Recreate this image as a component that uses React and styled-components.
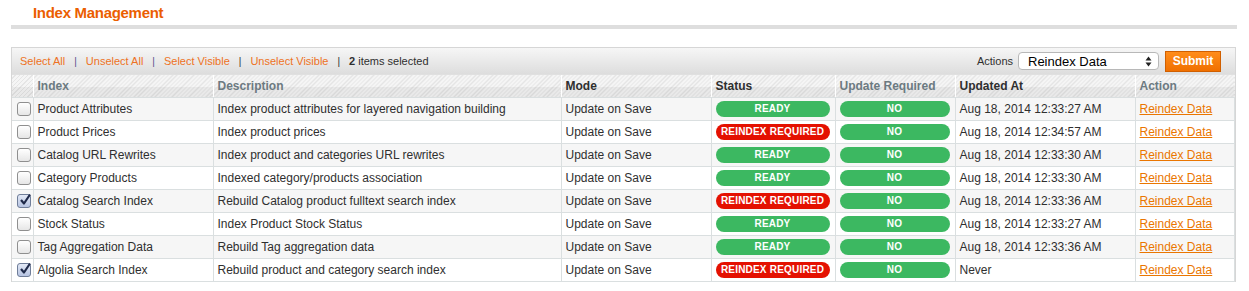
import React from 'react'
import styled, { createGlobalStyle } from 'styled-components'

const GlobalStyle = createGlobalStyle`
  body {
    margin: 0;
    background: #fff;
    font-family: Arial, "Liberation Sans", Helvetica, sans-serif;
    font-size: 12px;
    color: #2f2f2f;
  }
`

const Page = styled.div`
  padding: 4px 13px 0 11px;
`

const Title = styled.h3`
  margin: 0;
  padding-left: 22px;
  font-size: 15px;
  letter-spacing: -0.3px;
  line-height: 18px;
  font-weight: bold;
  color: #eb5e00;
`

const Rule = styled.div`
  height: 4px;
  margin-top: 3px;
  margin-right: -1px;
  background: #dedede;
`

const Grid = styled.div`
  margin-top: 18px;
  border: 1px solid #d6d6d6;
  border-bottom: none;
`

const MassBar = styled.div`
  height: 26px;
  display: flex;
  align-items: center;
  justify-content: space-between;
  padding: 0 14px 0 8px;
  background: linear-gradient(to bottom, #f6f6f6, #dddddd);
  border-bottom: 1px solid #e0e0e0;
`

const MassLinks = styled.div`
  display: flex;
  align-items: center;
  font-size: 11px;
  color: #2f2f2f;
`

const MassLink = styled.a`
  color: #ee7224;
  text-decoration: none;
`

const Sep = styled.span`
  color: ${p => p.dark ? '#2f2f2f' : '#5b4f8c'};
  margin: 0 9px;
  font-size: 10px;
`

const Strong = styled.strong`
  font-weight: bold;
  margin-right: 3px;
`

const ActionsBox = styled.div`
  display: flex;
  align-items: center;
  font-size: 11px;
`

const Label = styled.span`
  color: #2f2f2f;
  margin-right: 5px;
`

const Select = styled.div`
  width: 141px;
  height: 18px;
  box-sizing: border-box;
  display: flex;
  align-items: center;
  justify-content: space-between;
  padding: 0 6px 0 9px;
  background: #fff;
  border: 1px solid #b8b8b8;
  border-radius: 4px;
  font-size: 13px;
  color: #000;
`

const Submit = styled.button`
  margin-left: 6px;
  width: 56px;
  height: 21px;
  padding: 0;
  border: 1px solid #d05f00;
  background: linear-gradient(to bottom, #ff8c1a, #f07000);
  color: #fff;
  font-family: Arial, "Liberation Sans", sans-serif;
  font-size: 12px;
  font-weight: bold;
`

const Table = styled.table`
  width: 100%;
  border-collapse: collapse;
  table-layout: fixed;
`

const Th = styled.th`
  height: 22px;
  padding: 0 4px;
  text-align: left;
  font-size: 12px;
  font-weight: bold;
  color: ${p => p.dim ? '#6c7a81' : '#2f2f2f'};
  border-left: 1px solid #fff;
  border-bottom: 1px solid #dadfe0;
  background:
    linear-gradient(to bottom, rgba(0,0,0,0) 55%, rgba(0,0,0,0.05) 55%),
    repeating-linear-gradient(135deg, #f5f5f5 0 2px, #e5e5e5 2px 3px);
  &:first-child { border-left: none; }
`

const Row = styled.tr`
  background: ${p => p.odd ? '#f6f6f6' : '#fff'};
`

const Td = styled.td`
  height: 22px;
  padding: 0 4px;
  border-left: 1px solid #dadfe0;
  border-bottom: 1px solid #dadfe0;
  white-space: nowrap;
  overflow: hidden;
  &:first-child { border-left: none; padding: 0 0 0 5px; }
  &:last-child { border-right: 1px solid #dadfe0; }
`

const BadgeTd = styled(Td)`
  padding: 0 5px 0 4px;
`

const Badge = styled.div`
  height: 16px;
  border-radius: 8px;
  background: ${p => p.red ? '#e41101' : '#3cb861'};
  color: #fff;
  font-size: 10px;
  font-weight: bold;
  line-height: 16px;
  text-align: center;
  letter-spacing: 0.2px;
`

const Box = styled.span`
  display: block;
  width: 12px;
  height: 12px;
  border: 1px solid ${p => p.checked ? '#6f7d98' : '#8f8f8f'};
  border-radius: 3px;
  background: ${p => p.checked
    ? 'linear-gradient(to bottom, #e3e9f6, #b7c4e2)'
    : 'linear-gradient(to bottom, #ffffff, #e6e6e6)'};
  position: relative;
  svg { position: absolute; left: 1px; top: -2px; }
`

const ReLink = styled.a`
  color: #ea7601;
  text-decoration: underline;
`

function Checkbox({ checked }) {
  return (
    <Box checked={checked}>
      {checked && (
        <svg width="12" height="13" viewBox="0 0 12 13">
          <path d="M2 7 L5 10.5 L11 1.5" fill="none" stroke="#1f2a4a" strokeWidth="2.2" strokeLinejoin="round" />
        </svg>
      )}
    </Box>
  )
}

const rows = [
  ['Product Attributes', 'Index product attributes for layered navigation building', false, 'Aug 18, 2014 12:33:27 AM', false],
  ['Product Prices', 'Index product prices', true, 'Aug 18, 2014 12:34:57 AM', false],
  ['Catalog URL Rewrites', 'Index product and categories URL rewrites', false, 'Aug 18, 2014 12:33:30 AM', false],
  ['Category Products', 'Indexed category/products association', false, 'Aug 18, 2014 12:33:30 AM', false],
  ['Catalog Search Index', 'Rebuild Catalog product fulltext search index', true, 'Aug 18, 2014 12:33:36 AM', true],
  ['Stock Status', 'Index Product Stock Status', false, 'Aug 18, 2014 12:33:27 AM', false],
  ['Tag Aggregation Data', 'Rebuild Tag aggregation data', false, 'Aug 18, 2014 12:33:36 AM', false],
  ['Algolia Search Index', 'Rebuild product and category search index', true, 'Never', true],
]

export default function App() {
  return (
    <>
      <GlobalStyle />
      <Page>
        <Title>Index Management</Title>
        <Rule />
        <Grid>
          <MassBar>
            <MassLinks>
              <MassLink href="#">Select All</MassLink>
              <Sep>|</Sep>
              <MassLink href="#">Unselect All</MassLink>
              <Sep>|</Sep>
              <MassLink href="#">Select Visible</MassLink>
              <Sep dark>|</Sep>
              <MassLink href="#">Unselect Visible</MassLink>
              <Sep dark>|</Sep>
              <Strong>2</Strong> items selected
            </MassLinks>
            <ActionsBox>
              <Label>Actions</Label>
              <Select>
                <span>Reindex Data</span>
                <svg width="7" height="11" viewBox="0 0 7 11">
                  <path d="M3.5 0.5 L6.5 4.5 L0.5 4.5 Z M3.5 10.5 L6.5 6.5 L0.5 6.5 Z" fill="#222" />
                </svg>
              </Select>
              <Submit>Submit</Submit>
            </ActionsBox>
          </MassBar>
          <Table>
            <colgroup>
              <col style={{ width: 21 }} />
              <col style={{ width: 180 }} />
              <col style={{ width: 348 }} />
              <col style={{ width: 150 }} />
              <col style={{ width: 124 }} />
              <col style={{ width: 120 }} />
              <col style={{ width: 180 }} />
              <col />
            </colgroup>
            <thead>
              <tr>
                <Th />
                <Th dim>Index</Th>
                <Th dim>Description</Th>
                <Th>Mode</Th>
                <Th>Status</Th>
                <Th dim>Update Required</Th>
                <Th>Updated At</Th>
                <Th dim>Action</Th>
              </tr>
            </thead>
            <tbody>
              {rows.map(([name, desc, required, date, checked], i) => (
                <Row key={name} odd={i % 2 === 0}>
                  <Td><Checkbox checked={checked} /></Td>
                  <Td>{name}</Td>
                  <Td>{desc}</Td>
                  <Td>Update on Save</Td>
                  <BadgeTd><Badge red={required}>{required ? 'REINDEX REQUIRED' : 'READY'}</Badge></BadgeTd>
                  <BadgeTd><Badge>NO</Badge></BadgeTd>
                  <Td>{date}</Td>
                  <Td><ReLink href="#">Reindex Data</ReLink></Td>
                </Row>
              ))}
            </tbody>
          </Table>
        </Grid>
      </Page>
    </>
  )
}
